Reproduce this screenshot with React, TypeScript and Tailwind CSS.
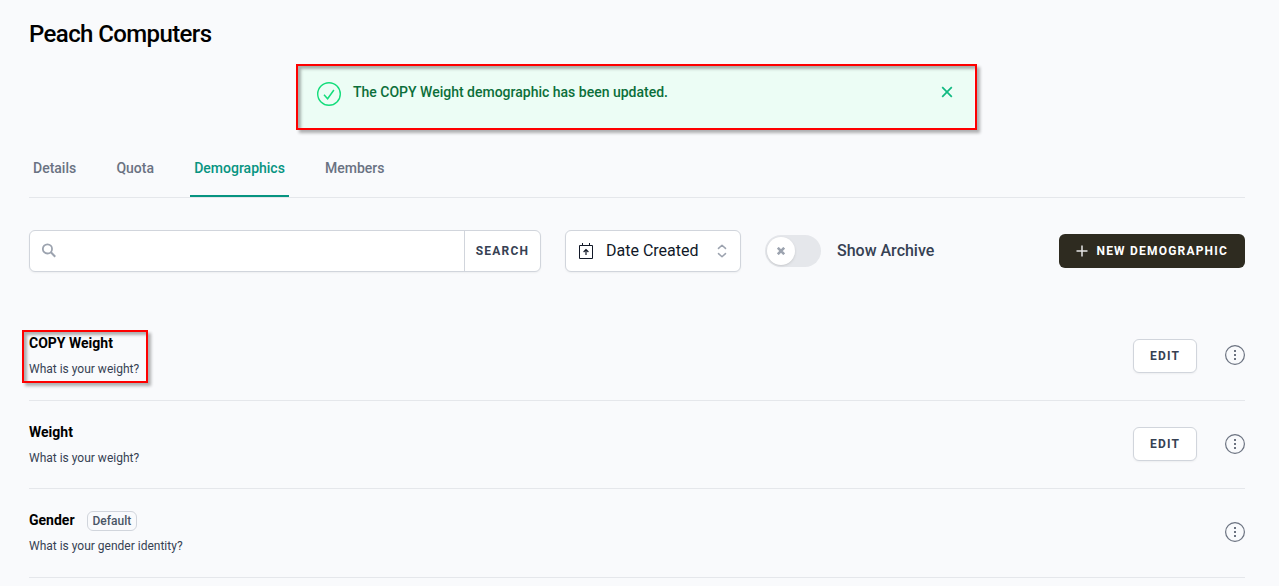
import { useState } from "react";

const TABS = ["Details", "Quota", "Demographics", "Members"];

const DEMOGRAPHICS = [
  {
    id: 1,
    name: "COPY Weight",
    question: "What is your weight?",
    isDefault: false,
    highlighted: true,
  },
  {
    id: 2,
    name: "Weight",
    question: "What is your weight?",
    isDefault: false,
    highlighted: false,
  },
  {
    id: 3,
    name: "Gender",
    question: "What is your gender identity?",
    isDefault: true,
    highlighted: false,
  },
];

// Red frame with a soft drop shadow, laid over the content it points at
function Callout({ className }: { className: string }) {
  return (
    <div
      className={`pointer-events-none absolute border-2 border-[#fe0000] shadow-[3px_3px_3px_rgba(0,0,0,0.3),inset_3px_3px_3px_rgba(0,0,0,0.3)] ${className}`}
    />
  );
}

function MoreIcon() {
  return (
    <svg className="block size-5" viewBox="0 0 20 20" fill="none">
      <circle cx="10" cy="10" r="9.4" stroke="#6b7280" strokeWidth="1.2" />
      <path d="M9 5h2v2H9zM9 9h2v2H9zM9 13h2v2H9z" fill="#6b7280" />
    </svg>
  );
}

function Alert({ onClose }: { onClose: () => void }) {
  return (
    <div className="relative ml-[269px] flex h-[62px] w-[676px] items-start rounded-md bg-[#ecfdf5] pt-4 pr-[21px] pl-[19px]">
      <svg className="block size-6 shrink-0" viewBox="0 0 24 24" fill="none">
        <circle cx="12" cy="12" r="11.3" stroke="#13dd7b" strokeWidth="1.4" />
        <path d="M7 12.8l3.6 3.9L16.9 8" stroke="#13dd7b" strokeWidth="1.5" />
      </svg>
      <p className="ml-3 text-sm leading-5 font-medium text-[#0b6f3a]">
        The COPY Weight demographic has been updated.
      </p>
      <button className="mt-1 ml-auto" onClick={onClose}>
        <svg className="block size-3" viewBox="0 0 12 12" fill="none">
          <path d="M1.2 1.2l9.6 9.6M10.8 1.2l-9.6 9.6" stroke="#10b981" strokeWidth="1.7" />
        </svg>
      </button>
      <Callout className="-top-0.5 -right-[3px] -bottom-0.5 -left-0.5" />
    </div>
  );
}

export default function App() {
  const [tab, setTab] = useState("Demographics");
  const [alertOpen, setAlertOpen] = useState(true);
  const [showArchive, setShowArchive] = useState(false);

  return (
    <div className="h-[586px] overflow-hidden bg-[#f9fafc] pt-[18px] pr-[34px] pl-[29px] font-[Roboto,sans-serif]">
      <h1 className="text-2xl leading-8 font-medium tracking-tight text-black">
        Peach Computers
      </h1>

      <div className="mt-4 h-[62px]">
        {alertOpen && <Alert onClose={() => setAlertOpen(false)} />}
      </div>

      <nav className="mt-[29px] flex h-[41px] gap-[32.2px] border-b border-gray-200">
        {TABS.map((name) => (
          <button
            key={name}
            onClick={() => setTab(name)}
            className={`flex h-10 items-start border-b-2 px-1 text-sm leading-[22px] font-medium ${
              tab === name
                ? "border-[#079481] text-[#079481]"
                : "border-transparent text-gray-500"
            }`}
          >
            {name}
          </button>
        ))}
      </nav>

      <div className="mt-8 flex h-[42px] items-center">
        <div className="flex h-[42px] w-[512px] rounded-md border border-gray-300 bg-white shadow-xs">
          <div className="flex flex-1 items-center pl-3">
            <svg className="mt-[-1px] block size-[15px]" viewBox="0 0 15 15" fill="none">
              <circle cx="5.8" cy="5.8" r="4.9" stroke="#9ca3af" strokeWidth="1.9" />
              <path d="M9.2 9.2l4.9 4.9" stroke="#9ca3af" strokeWidth="2.2" />
            </svg>
            <input className="ml-3 w-full bg-transparent outline-none" />
          </div>
          <button className="w-[76px] border-l border-gray-300 text-xs font-bold tracking-widest text-gray-700">
            SEARCH
          </button>
        </div>

        <button className="ml-6 flex h-[42px] w-44 items-center rounded-md border border-gray-300 bg-white pr-3 pl-[13px] text-gray-900 shadow-xs">
          <svg className="block h-4 w-[14px]" viewBox="0 0 14 16" fill="none">
            <path d="M.5 2.5h13v13H.5zM3.5 0v3M10.5 0v3" stroke="#111827" />
            <path d="M7 12V6.8M4.6 9L7 6.6 9.4 9" stroke="#111827" strokeWidth="1.2" />
          </svg>
          <span className="ml-[13px]">Date Created</span>
          <svg className="ml-auto block h-[14px] w-3" viewBox="0 0 12 14" fill="none">
            <path
              d="M2.5 4.4L6 1.2l3.5 3.2M2.5 9.6L6 12.8l3.5-3.2"
              stroke="#9ca3af"
              strokeWidth="1.5"
              strokeLinecap="round"
              strokeLinejoin="round"
            />
          </svg>
        </button>

        <button
          onClick={() => setShowArchive(!showArchive)}
          className={`ml-6 flex h-8 w-14 items-center rounded-full bg-gray-200 px-0.5 ${
            showArchive ? "justify-end" : "justify-start"
          }`}
        >
          <span className="flex size-7 items-center justify-center rounded-full bg-white shadow-sm">
            <svg className="block size-2" viewBox="0 0 8 8" fill="none">
              <path d="M.8.8l6.4 6.4M7.2.8L.8 7.2" stroke="#9ca3af" strokeWidth="2.6" />
            </svg>
          </span>
        </button>
        <span className="ml-4 font-medium text-gray-700">Show Archive</span>

        <button className="ml-auto flex h-[34px] w-[186px] items-center rounded-md bg-[#2e2b20] pl-[17px] text-xs font-bold tracking-widest text-white">
          <svg className="block size-3" viewBox="0 0 12 12" fill="none">
            <path d="M6 .5v11M.5 6h11" stroke="#e5e5e3" strokeWidth="1.5" />
          </svg>
          <span className="ml-[8.5px]">NEW DEMOGRAPHIC</span>
        </button>
      </div>

      <ul className="mt-10">
        {DEMOGRAPHICS.map((item) => (
          <li
            key={item.id}
            className="relative flex h-[88.5px] justify-between border-b border-gray-200"
          >
            <div className="pt-[21px]">
              <div className="flex h-5 items-center">
                <h2 className="text-sm leading-5 font-bold text-black">{item.name}</h2>
                {item.isDefault && (
                  <span className="mt-0.5 ml-3 flex h-5 items-center rounded-md border border-gray-300 px-[5px] text-xs font-medium text-gray-600">
                    Default
                  </span>
                )}
              </div>
              <p className="mt-2 text-xs leading-4 text-gray-700">{item.question}</p>
            </div>
            <div className="flex items-center">
              {!item.isDefault && (
                <button className="mr-7 h-[34px] w-16 rounded-md border border-gray-300 bg-white text-xs font-bold tracking-widest text-gray-700 shadow-xs">
                  EDIT
                </button>
              )}
              <button className="-mt-px">
                <MoreIcon />
              </button>
            </div>
            {item.highlighted && (
              <Callout className="top-[18px] left-[-7px] h-[53px] w-[126px]" />
            )}
          </li>
        ))}
      </ul>
    </div>
  );
}
